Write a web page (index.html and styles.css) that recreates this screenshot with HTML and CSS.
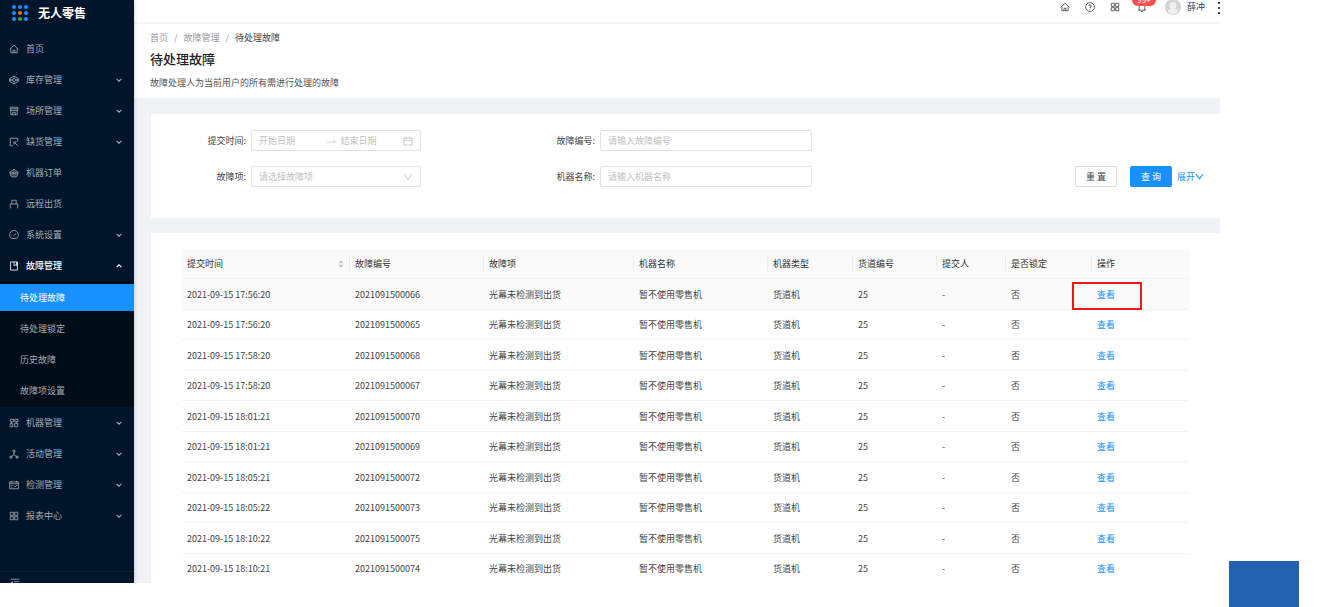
FILE: index.html
```html
<!DOCTYPE html>
<html lang="zh-CN">
<head>
<meta charset="utf-8">
<title>待处理故障</title>
<link rel="stylesheet" href="styles.css">
</head>
<body>
<svg class="defs" aria-hidden="true">
  <symbol id="down" viewBox="0 0 10 10"><path d="M2 3.500 5 6.500 8 3.500"/></symbol>
  <symbol id="home" viewBox="0 0 16 16"><path d="M1 8.500 8 2l7 6.500M3 7.500V14h10V7.500M6.500 14v-4h3v4"/></symbol>
  <symbol id="grid" viewBox="0 0 16 16"><path d="M2 2h5v5H2zM9 2h5v5H9zM2 9h5v5H2zM9 9h5v5H9z"/></symbol>
</svg>
<div class="app">
  <nav class="side">
    <div class="logo">
      <svg class="logo-mark" viewBox="0 0 16 16"><g fill="#1890ff"><circle cx="2" cy="2" r="2"/><circle cx="8" cy="2" r="2"/><circle cx="14" cy="2" r="2"/><circle cx="2" cy="8" r="2"/><circle cx="14" cy="8" r="2"/><circle cx="2" cy="14" r="2"/><circle cx="14" cy="14" r="2"/></g><circle cx="8" cy="8" r="2" fill="#fa6a0a"/><circle cx="8" cy="14" r="2" fill="#28a745"/></svg>
      <span>无人零售</span>
    </div>
    <ul class="menu">
      <li><a class="item" href="#"><svg class="icon"><use href="#home"/></svg>首页</a></li>
      <li><a class="item" href="#"><svg class="icon" viewBox="0 0 16 16"><path d="M8 1.500 15 6v4l-7 4.500L1 10V6zM1 6l7 4.500L15 6M1 10l7-4.500 7 4.500M8 1.500v4M8 10.500v4"/></svg>库存管理<svg class="arrow"><use href="#down"/></svg></a></li>
      <li><a class="item" href="#"><svg class="icon" viewBox="0 0 16 16"><path d="M2 2h12v5H2zM3 7v7h10V7M2 4.500h12M6 14v-4h4v4"/></svg>场所管理<svg class="arrow"><use href="#down"/></svg></a></li>
      <li><a class="item" href="#"><svg class="icon" viewBox="0 0 16 16"><path d="M6 14H2V2h12v5M8 8l6 6M8 12V8h4"/></svg>缺货管理<svg class="arrow"><use href="#down"/></svg></a></li>
      <li><a class="item" href="#"><svg class="icon" viewBox="0 0 16 16"><path d="M8 2l7 5-3 7H4L1 7zM5 6v6M8 4v9M11 6v6M2 8h12"/></svg>机器订单</a></li>
      <li><a class="item" href="#"><svg class="icon" viewBox="0 0 16 16"><path d="M4.500 8V2h7v6M2 15V8h12v7"/></svg>远程出货</a></li>
      <li><a class="item" href="#"><svg class="icon" viewBox="0 0 16 16"><path d="M4 13.500a7 7 0 1 1 8 0zM7.500 9.500l3.500-4M3.500 8.500h1"/></svg>系统设置<svg class="arrow"><use href="#down"/></svg></a></li>
      <li><a class="item open" href="#"><svg class="icon" viewBox="0 0 16 16"><path d="M2.500 1.500h11v13h-11zM8 1.500v6l2-1.500 2 1.500v-6"/></svg>故障管理<svg class="arrow up"><use href="#down"/></svg></a>
        <ul class="submenu">
          <li><a class="item selected" href="#">待处理故障</a></li>
          <li><a class="item" href="#">待处理锁定</a></li>
          <li><a class="item" href="#">历史故障</a></li>
          <li><a class="item" href="#">故障项设置</a></li>
        </ul>
      </li>
      <li><a class="item" href="#"><svg class="icon" viewBox="0 0 16 16"><path d="M2 2h5v4H2zM9 2h5v4H9zM4 6v3M11.500 6v3M2 9h4v5H2zM9 9h5v5H9z"/></svg>机器管理<svg class="arrow"><use href="#down"/></svg></a></li>
      <li><a class="item" href="#"><svg class="icon" viewBox="0 0 16 16"><path d="M8 5v4M8 9l-4 3M8 9l4 3M6.500 2h3v3h-3zM1.500 11.500h3v3h-3zM11.500 11.500h3v3h-3z"/></svg>活动管理<svg class="arrow"><use href="#down"/></svg></a></li>
      <li><a class="item" href="#"><svg class="icon" viewBox="0 0 16 16"><path d="M1 3h14v11H1zM1 6h14M4 1.500V4M12 1.500V4M3.500 9h2M3.500 11.500h2M7.500 9l2 2 3.500-3"/></svg>检测管理<svg class="arrow"><use href="#down"/></svg></a></li>
      <li><a class="item" href="#"><svg class="icon"><use href="#grid"/></svg>报表中心<svg class="arrow"><use href="#down"/></svg></a></li>
    </ul>
    <button class="fold" type="button" aria-label="收起菜单"><svg class="icon" viewBox="0 0 16 16"><path d="M1 2h14M6 6h9M6 10h9M1 14h14M1 8l3-2v4z"/></svg></button>
  </nav>
  <div class="main">
    <header class="topbar">
      <a class="tool" href="#" aria-label="首页"><svg class="icon"><use href="#home"/></svg></a>
      <a class="tool" href="#" aria-label="帮助"><svg class="icon" viewBox="0 0 16 16"><circle cx="8" cy="8" r="7"/><path d="M6 6.500a2 2 0 1 1 2 2v1.200M8 11v1.200"/></svg></a>
      <a class="tool" href="#" aria-label="应用"><svg class="icon"><use href="#grid"/></svg></a>
      <a class="tool bell" href="#" aria-label="消息"><svg class="icon" viewBox="0 0 16 16"><path d="M1.500 13h13M3.500 13V7a4.500 4.500 0 0 1 9 0v6M6.500 15h3M8 1v1.500"/></svg><span class="badge">99+</span></a>
      <a class="user" href="#"><svg class="avatar" viewBox="0 0 16 16"><circle cx="8" cy="8" r="8" fill="#d3d3d3"/><circle cx="8" cy="6.500" r="3.500" fill="#f0f0f0"/><path d="M3 13c0-5 10-5 10 0-2 2.500-8 2.500-10 0z" fill="#f0f0f0"/></svg>薛冲</a>
      <button class="more" type="button" aria-label="更多"><i></i><i></i><i></i></button>
    </header>
    <section class="page-head">
      <div class="crumbs"><a href="#">首页</a><span>/</span><a href="#">故障管理</a><span>/</span><b>待处理故障</b></div>
      <h1>待处理故障</h1>
      <p>故障处理人为当前用户的所有需进行处理的故障</p>
    </section>
    <div class="content">
      <form class="card search">
        <div class="field"><label for="start">提交时间:</label>
          <div class="box range"><input id="start" placeholder="开始日期"><svg class="to" viewBox="0 0 16 16"><path d="M0 10h15l-4-4"/></svg><input aria-label="结束日期" placeholder="结束日期"><svg class="icon" viewBox="0 0 16 16"><path d="M1.500 3h13v11.500h-13zM1.500 7h13M5 1v4M11 1v4"/></svg></div>
        </div>
        <div class="field"><label for="no">故障编号:</label><input class="box" id="no" placeholder="请输入故障编号"></div>
        <div class="field second"><label for="kind">故障项:</label>
          <div class="box pick"><select id="kind"><option>请选择故障项</option></select><svg class="icon" viewBox="0 0 16 16"><path d="M3 4.500 8 12l5-7.500"/></svg></div>
        </div>
        <div class="field second"><label for="name">机器名称:</label><input class="box" id="name" placeholder="请输入机器名称"></div>
        <div class="actions">
          <button class="btn" type="reset">重 置</button><button class="btn primary" type="button">查 询</button><a class="link" href="#">展开<svg class="expand" viewBox="0 0 16 16"><path d="M2 4l6 8 6-8"/></svg></a>
        </div>
      </form>
      <div class="card list">
        <table>
          <colgroup><col class="c-time"><col class="c-no"><col class="c-kind"><col class="c-name"><col class="c-type"><col class="c-lane"><col class="c-by"><col class="c-lock"><col class="c-act"></colgroup>
          <thead><tr><th><div class="sort">提交时间<svg viewBox="0 0 8 10"><path d="M4 0 7 4H1zM4 10 1 6h6z"/></svg></div></th><th>故障编号</th><th>故障项</th><th>机器名称</th><th>机器类型</th><th>货道编号</th><th>提交人</th><th>是否锁定</th><th>操作</th></tr></thead>
          <tbody>
            <tr class="hover"><td>2021-09-15 17:56:20</td><td>2021091500066</td><td>光幕未检测到出货</td><td>暂不使用零售机</td><td>货道机</td><td>25</td><td>-</td><td>否</td><td class="marked"><a class="link" href="#">查看</a></td></tr>
            <tr><td>2021-09-15 17:56:20</td><td>2021091500065</td><td>光幕未检测到出货</td><td>暂不使用零售机</td><td>货道机</td><td>25</td><td>-</td><td>否</td><td><a class="link" href="#">查看</a></td></tr>
            <tr><td>2021-09-15 17:58:20</td><td>2021091500068</td><td>光幕未检测到出货</td><td>暂不使用零售机</td><td>货道机</td><td>25</td><td>-</td><td>否</td><td><a class="link" href="#">查看</a></td></tr>
            <tr><td>2021-09-15 17:58:20</td><td>2021091500067</td><td>光幕未检测到出货</td><td>暂不使用零售机</td><td>货道机</td><td>25</td><td>-</td><td>否</td><td><a class="link" href="#">查看</a></td></tr>
            <tr><td>2021-09-15 18:01:21</td><td>2021091500070</td><td>光幕未检测到出货</td><td>暂不使用零售机</td><td>货道机</td><td>25</td><td>-</td><td>否</td><td><a class="link" href="#">查看</a></td></tr>
            <tr><td>2021-09-15 18:01:21</td><td>2021091500069</td><td>光幕未检测到出货</td><td>暂不使用零售机</td><td>货道机</td><td>25</td><td>-</td><td>否</td><td><a class="link" href="#">查看</a></td></tr>
            <tr><td>2021-09-15 18:05:21</td><td>2021091500072</td><td>光幕未检测到出货</td><td>暂不使用零售机</td><td>货道机</td><td>25</td><td>-</td><td>否</td><td><a class="link" href="#">查看</a></td></tr>
            <tr><td>2021-09-15 18:05:22</td><td>2021091500073</td><td>光幕未检测到出货</td><td>暂不使用零售机</td><td>货道机</td><td>25</td><td>-</td><td>否</td><td><a class="link" href="#">查看</a></td></tr>
            <tr><td>2021-09-15 18:10:22</td><td>2021091500075</td><td>光幕未检测到出货</td><td>暂不使用零售机</td><td>货道机</td><td>25</td><td>-</td><td>否</td><td><a class="link" href="#">查看</a></td></tr>
            <tr><td>2021-09-15 18:10:21</td><td>2021091500074</td><td>光幕未检测到出货</td><td>暂不使用零售机</td><td>货道机</td><td>25</td><td>-</td><td>否</td><td><a class="link" href="#">查看</a></td></tr>
          </tbody>
        </table>
      </div>
    </div>
  </div>
</div>
<div class="block"></div>
</body>
</html>
```
FILE: styles.css
```css
*, ::before, ::after { box-sizing: border-box; }
body {
  margin: 0;
  display: grid;
  grid-template-columns: 1fr 113px;
  height: 100vh;
  overflow: hidden;
  background: #fff;
  color: #444;
  font: 9px/14px "Noto Sans CJK SC", sans-serif;
}
a { color: inherit; text-decoration: none; }
ul { list-style: none; margin: 0; padding: 0; }
svg { fill: none; stroke: currentColor; stroke-width: 1.3; flex: none; }
button, input, select { font: inherit; color: inherit; margin: 0; }
.defs { position: absolute; width: 0; height: 0; }
.icon { width: 10px; height: 10px; }
.app { display: flex; height: calc(100vh - 24px); overflow: hidden; }
.block { align-self: end; width: 70px; height: 46px; margin-left: 9px; background: #2462b0; }

.side {
  flex: none;
  width: 134px;
  display: flex;
  flex-direction: column;
  background: #001529;
  color: #a6adb4;
  box-shadow: 1px 0 3px rgba(0, 21, 41, .15);
  z-index: 1;
}
.logo {
  display: flex;
  align-items: center;
  gap: 10px;
  height: 33px;
  padding: 0 12px 8px;
  color: #fff;
  font-size: 12px;
  font-weight: 700;
}
.logo-mark { width: 16px; height: 16px; stroke: none; }
.menu { flex: 1; }
.item {
  display: flex;
  align-items: center;
  height: 27px;
  margin: 2px 0;
  padding: 0 10px 0 9px;
}
.item .icon { margin-right: 7px; }
.menu > li, .submenu > li { display: flow-root; }
.arrow { width: 10px; height: 8px; margin-left: auto; }
.up { transform: rotate(180deg); }
.open { color: #fff; font-weight: 500; }
.submenu { padding: 1px 0; background: #000c17; }
.submenu .item { padding-left: 20px; }
.submenu .selected { background: #1890ff; color: #fff; }
.fold {
  height: 12px;
  padding: 6px 10px 0;
  border: 0;
  border-top: 1px solid #0b1f33;
  background: none;
  overflow: hidden;
  text-align: left;
}
.fold .icon { display: block; }

.main { flex: 1; min-width: 0; display: flex; flex-direction: column; }
.topbar {
  flex: none;
  display: flex;
  justify-content: flex-end;
  height: 24px;
  border-bottom: 2px solid #f5f5f5;
  overflow: hidden;
}
.tool { width: 10px; height: 14px; margin-right: 15px; display: flex; align-items: center; }
.bell { position: relative; width: 12px; padding-left: 2px; margin-right: 18px; }
.badge {
  position: absolute;
  left: -3px;
  top: -6px;
  width: 24px;
  height: 12px;
  border-radius: 6px;
  background: #ff4d4f;
  color: #fff;
  font-size: 8px;
  line-height: 12px;
  text-align: center;
}
.user { display: flex; align-items: center; gap: 6px; height: 14px; margin-right: 13px; }
.avatar { width: 16px; height: 16px; stroke: none; }
.more {
  display: flex;
  flex-direction: column;
  gap: 3px;
  width: 2px;
  padding: 2px 0;
  border: 0;
  background: none;
}
.more i { width: 2px; height: 2px; background: #444; }

.page-head { flex: none; padding: 7px 16px 8px; }
.crumbs { display: flex; gap: 6px; color: #999; }
.crumbs b { font-weight: 400; color: #444; }
h1 { margin: 5px 0 8px; font-size: 13px; line-height: 18px; font-weight: 500; color: #222; }
p { margin: 0; color: #555; }
.content {
  flex: 1;
  display: flex;
  flex-direction: column;
  gap: 15px;
  padding: 16px 0 0 17px;
  background: #f0f2f5;
}
.card { background: #fff; }
.search {
  display: grid;
  grid-template-columns: minmax(0, 349fr) minmax(0, 349fr) minmax(0, 371fr);
  row-gap: 15px;
  padding: 16px 0 31px;
}
.field { display: flex; align-items: center; padding-right: 37px; }
.field label { width: 95px; margin-right: 5px; text-align: right; }
.box {
  flex: 1;
  min-width: 0;
  height: 21px;
  padding: 0 7px;
  border: 1px solid #e3e3e3;
  border-radius: 2px;
  background: #fff;
}
.range, .pick { display: flex; align-items: center; color: #bfbfbf; margin-right: 42px; }
.range input, .pick select {
  flex: 1;
  min-width: 0;
  padding: 0;
  border: 0;
  background: none;
  appearance: none;
  outline: 0;
}
.to { width: 9px; height: 10px; margin: 0 5px; }
::placeholder { color: #bfbfbf; opacity: 1; }
.second { grid-row: 2; }
.actions { grid-row: 2; display: flex; justify-content: flex-end; align-items: center; padding-right: 16px; }
.btn {
  width: 42px;
  height: 21px;
  padding: 0;
  margin-right: 13px;
  border: 1px solid #d9d9d9;
  border-radius: 2px;
  background: #fff;
}
.primary { margin-right: 5px; border-color: #1890ff; background: #1890ff; color: #fff; }
.link { color: #1890ff; }
.actions .link { display: flex; align-items: center; }
.expand { width: 9px; height: 9px; stroke-width: 2; }

.list { flex: 1; padding: 16px 31px 0; }
table { width: 100%; table-layout: fixed; border-collapse: separate; border-spacing: 0; }
.c-time { width: 168px; }
.c-no, .c-name { width: 134px; }
.c-kind { width: 150px; }
.c-type { width: 85px; }
.c-lane { width: 84px; }
.c-by { width: 69px; }
.c-lock { width: 86px; }
.c-act { width: 97px; }
th, td { height: 30px; padding: 1px 5px 0; text-align: left; font-weight: 400; border-bottom: 1px solid #f3f3f3; }
th {
  color: #333;
  background: linear-gradient(#ececec, #ececec) right center / 1px 15px no-repeat #fafafa;
}
th:last-child { background: #fafafa; }
tr:nth-child(odd) td { height: 31px; }
.hover td { background: #fafafa; }
.sort { display: flex; justify-content: space-between; align-items: center; }
.sort svg { width: 6px; height: 8px; margin-right: 1px; fill: #bfbfbf; stroke: none; }
.marked { position: relative; }
.marked::after {
  content: "";
  position: absolute;
  left: -20px;
  top: 3px;
  width: 70px;
  height: 28px;
  border: 2px solid #f01818;
}
```
